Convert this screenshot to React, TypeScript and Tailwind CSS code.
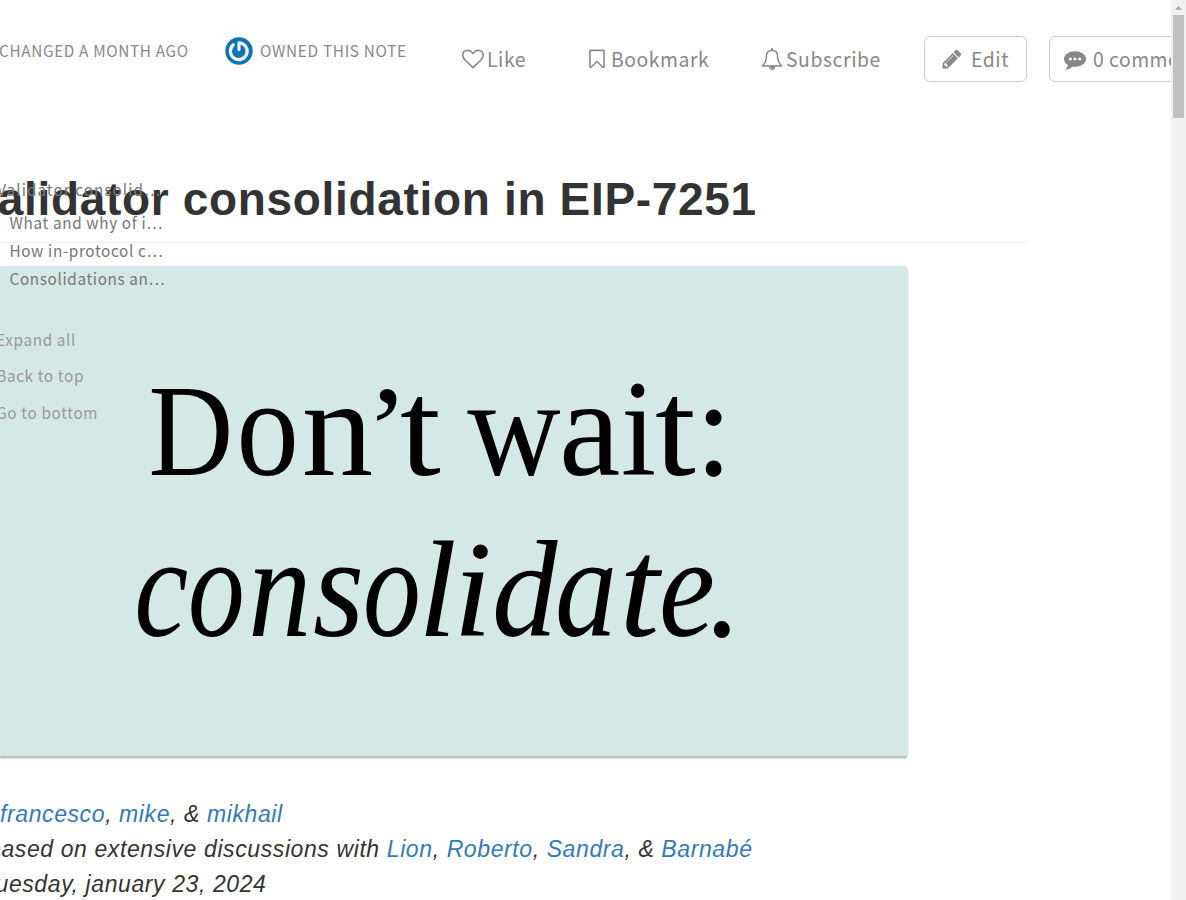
import React from "react";

const UI = "font-['Noto_Sans_CJK_SC','Open_Sans',sans-serif]";

function Fa({ d, className }: { d: string; className: string }) {
  return (
    <svg viewBox="0 0 1792 1792" fill="currentColor" className={className}>
      <path d={d} />
    </svg>
  );
}

const heart =
  "M1664 596q0-81-21.500-143t-55-98.500-81.500-59.500-94-31-98-8-112 25.500-110.500 64-86.500 72-60 61.500q-18 22-49 22t-49-22q-24-28-60-61.500t-86.500-72-110.500-64-112-25.500-98 8-94 31-81.500 59.500-55 98.500-21.500 143q0 168 187 355l581 560 580-559q188-188 188-356zm128 0q0 221-229 450l-623 600q-18 18-44 18t-44-18l-624-602q-10-8-27.500-26t-55.500-65.500-68-97.500-53.500-121-23.500-138q0-220 127-344t351-124q62 0 126.500 21.500t120 58 95.500 68.500 76 68q36-36 76-68t95.500-68.500 120-58 126.500-21.500q224 0 351 124t127 344z";
const bookmark =
  "M1408 256h-1024v1242l423-406 89-85 89 85 423 406v-1242zm12-128q23 0 44 9 33 13 52.500 41t19.500 62v1289q0 34-19.500 62t-52.500 41q-19 8-44 8-48 0-83-32l-441-424-441 424q-36 33-83 33-23 0-44-9-33-13-52.500-41t-19.500-62v-1289q0-34 19.500-62t52.500-41q21-9 44-9h1048z";
const bell =
  "M912 1696q0-16-16-16-59 0-101.500-42.500t-42.500-101.500q0-16-16-16t-16 16q0 73 51.500 124.500t124.500 51.500q16 0 16-16zM246 1408h1300q-266-300-266-832 0-51-24-105t-69-103-121.500-80.500-169.500-31.500-169.500 31.500-121.500 80.500-69 103-24 105q0 532-266 832zm1482 0q0 52-38 90t-90 38h-448q0 106-75 181t-181 75-181-75-75-181h-448q-52 0-90-38t-38-90q50-42 91-88t85-119.500 74.500-158.500 50-206 19.500-260q0-152 117-282.500t307-158.500q-8-19-8-39 0-40 28-68t68-28 68 28 28 68q0 20-8 39 190 28 307 158.500t117 282.500q0 139 19.500 260t50 206 74.500 158.500 85 119.500 91 88z";
const pencil =
  "M491 1536l91-91-235-235-91 91v107h128v128h107zm523-928q0-22-22-22-10 0-17 7l-542 542q-7 7-7 17 0 22 22 22 10 0 17-7l542-542q7-7 7-17zm-54-192l416 416-832 832h-416v-416zm683 96q0 53-37 90l-166 166-416-416 166-165q36-38 90-38 53 0 91 38l235 234q37 39 37 91z";
const comment =
  "M640 896q0-53-37.500-90.500t-90.500-37.500-90.500 37.500-37.500 90.500 37.500 90.500 90.500 37.500 90.500-37.500 37.500-90.500zm384 0q0-53-37.500-90.500t-90.500-37.500-90.500 37.500-37.500 90.500 37.500 90.500 90.500 37.500 90.500-37.500 37.500-90.500zm384 0q0-53-37.500-90.500t-90.500-37.500-90.500 37.500-37.500 90.500 37.500 90.500 90.500 37.500 90.500-37.500 37.500-90.500zm384 0q0 174-120 321.500t-326 233-450 85.500q-110 0-211-18-173 173-435 229-52 10-86 13-12 1-22-6t-13-18q-4-15 20-37 5-5 23.500-21.500t25.500-23.500 23.500-25.500 24-31.500 20.500-37 20-48 14.500-57.500 12.500-72.500q-146-90-229.500-216.500t-83.500-269.500q0-174 120-321.500t326-233 450-85.500 450 85.500 326 233 120 321.500z";

function Avatar() {
  return (
    <svg viewBox="0 0 28 28" className="h-7 w-7 shrink-0">
      <circle cx="14" cy="14" r="13.700" fill="#0a74b9" />
      <path d="M8.300 7.800A8.400 8.400 0 1 0 14 5.800V12.600" fill="none" stroke="#f4f4f2" strokeWidth="3.200" strokeLinecap="round" strokeLinejoin="round" />
    </svg>
  );
}

// Condensed label in the interface face
function Label({ children }: { children: React.ReactNode }) {
  return <span className="mb-[2px] inline-block origin-left scale-x-95">{children}</span>;
}

function Header() {
  return (
    <header className={`${UI} flex h-[118px] w-[1300px] pt-9 text-[#888]`}>
      <div className="flex h-[30px] w-[225px] shrink-0 items-center text-[16.1px] tracking-[0.71px] whitespace-nowrap">
        <span className="-ml-px flex">
          <Label>CHANGED A MONTH AGO</Label>
        </span>
      </div>
      <div className="flex h-[30px] w-[237px] shrink-0 items-center gap-[7px] text-[16.1px] tracking-[0.75px] whitespace-nowrap">
        <Avatar />
        <Label>OWNED THIS NOTE</Label>
      </div>
      <div className="flex h-[46px] w-[124px] shrink-0 items-center gap-[3px] text-[20.4px] tracking-[0.6px]">
        <Fa d={heart} className="h-[22px] w-[22px]" />
        <Label>Like</Label>
      </div>
      <div className="flex h-[46px] w-[175px] shrink-0 items-center gap-[3px] text-[20.4px] tracking-[0.55px]">
        <Fa d={bookmark} className="h-[22px] w-[22px]" />
        <Label>Bookmark</Label>
      </div>
      <div className="flex h-[46px] w-[162.5px] shrink-0 items-center gap-[3px] text-[20.4px] tracking-[0.6px]">
        <Fa d={bell} className="h-[22px] w-[22px]" />
        <Label>Subscribe</Label>
      </div>
      <button className="flex h-[46px] w-[103px] shrink-0 items-center gap-[8px] rounded-[6px] border border-[#ccc] pl-4 text-[20.4px] tracking-[0.6px]">
        <Fa d={pencil} className="h-[22px] w-[22px]" />
        <Label>Edit</Label>
      </button>
      <button className="ml-[22px] flex h-[46px] w-[170px] shrink-0 items-center gap-[7px] rounded-[6px] border border-[#ccc] pl-3.5 text-[20.4px] tracking-[0.5px] whitespace-nowrap">
        <Fa d={comment} className="h-[22px] w-[22px]" />
        <Label>0 comments</Label>
      </button>
    </header>
  );
}

// char, ink left and right on the canvas, ink left and right in 1/1000 em, font size, baseline
type Glyph = [string, number, number, number, number, number, number];

const roman: Glyph[] = [
  ["D", 150.5, 229, 16, 685, 131, 475],
  ["o", 240, 295, 29, 470, 139, 475],
  ["n", 304, 371, 16, 485, 139, 475],
  ["’", 376, 394, 79, 218, 123, 471],
  ["t", 402, 441, 13, 279, 138, 475],
  ["w", 470, 557, 21, 694, 139, 475],
  ["a", 564, 620, 37, 442, 139, 475],
  ["i", 623, 653, 16, 253, 138, 475],
  ["t", 657, 696, 13, 279, 138, 475],
  [":", 706, 721, 81, 192, 139, 475],
];

const italic: Glyph[] = [
  ["c", 138, 186, 30, 425, 144, 636],
  ["o", 191, 241, 27, 468, 144, 636],
  ["n", 250, 308, 14, 474, 144, 636],
  ["s", 315, 361, 16, 366, 144, 636],
  ["o", 366, 417, 27, 468, 144, 636],
  ["l", 424, 457, 41, 279, 138, 636],
  ["i", 460, 490, 49, 264, 138, 636],
  ["d", 494, 561, 15, 527, 138, 636],
  ["a", 557, 614, 17, 476, 144, 636],
  ["t", 625, 662, 38, 296, 142, 636],
  ["e", 663, 711, 31, 412, 144, 636],
  [".", 712, 727, 27, 138, 144, 636],
];

function Line({ glyphs }: { glyphs: Glyph[] }) {
  return (
    <>
      {glyphs.map(([ch, l, r, fl, fr, size, y], i) => {
        const sx = (r - l) / (((fr - fl) * size) / 1000);
        const x = l - (fl * size * sx) / 1000;
        return (
          <text key={i} fontSize={size} transform={`translate(${x} ${y}) scale(${sx} 1)`}>
            {ch}
          </text>
        );
      })}
    </>
  );
}

function Banner() {
  return (
    <div className="h-[490px] w-[907px] rounded-r-[2px] bg-[#d4e9e6] shadow-[0_2px_0_#c2c4c4,0_2px_3px_rgba(0,0,0,0.3)]">
      <svg viewBox="0 266 907 490" className="h-[490px] w-[907px] font-['Liberation_Serif',serif]">
        <Line glyphs={roman} />
        <g fontStyle="italic">
          <Line glyphs={italic} />
        </g>
      </svg>
    </div>
  );
}

function A({ children }: { children: React.ReactNode }) {
  return <a className="text-[#337ab7]">{children}</a>;
}

function Toc() {
  return (
    <nav
      className={`${UI} absolute top-[175px] left-0 origin-left scale-x-95 text-[16.1px] tracking-[0.67px] whitespace-nowrap text-[#777]`}
    >
      <div className="-ml-[3px] h-[33px] leading-7 tracking-[1.1px]">Validator consolid…</div>
      <div className="ml-[10px] h-7 leading-7">What and why of i…</div>
      <div className="ml-[10px] h-7 leading-7">How in-protocol c…</div>
      <div className="ml-[10px] h-7 leading-7">Consolidations an…</div>
      <div className="mt-[29px] -ml-[4px] flex flex-col text-[#999]">
        <a className="h-[36px] leading-[36px]">Expand all</a>
        <a className="h-[36px] leading-[36px]">Back to top</a>
        <a className="h-[37px] leading-[38px]">Go to bottom</a>
      </div>
    </nav>
  );
}

export default function App() {
  return (
    <div className="flex h-[900px] w-[1186px] overflow-hidden bg-white">
      <div className="relative w-[1171px] shrink-0 overflow-hidden">
        <Header />
        <main className="font-['Liberation_Sans',sans-serif] text-[#333]">
          <h1 className="mt-[52px] h-[73px] w-[1027px] border-b border-[#eee] text-[46px] leading-[58px] font-bold tracking-[0.67px] whitespace-nowrap">
            <span className="-ml-[31px]">Validator consolidation in EIP-7251</span>
          </h1>
          <div className="mt-[23px]">
            <Banner />
          </div>
          <div className="mt-[41px] text-[23px] leading-[35px] tracking-[0.6px] whitespace-nowrap italic">
            <p>
              <A>francesco</A>, <A>mike</A>, &amp; <A>mikhail</A>
            </p>
            <p className="-ml-[12px]">
              based on extensive discussions with <A>Lion</A>, <A>Roberto</A>, <A>Sandra</A>, &amp; <A>Barnabé</A>
            </p>
            <p className="-ml-[11.5px]">tuesday, january 23, 2024</p>
          </div>
        </main>
        <Toc />
      </div>
      <div className="flex w-[15px] shrink-0 flex-col items-center bg-[#f1f1f1]">
        <div className="flex h-[15px] items-center justify-center">
          <svg viewBox="0 0 8 4" className="h-1 w-[7px]" fill="#a3a3a3">
            <path d="M0 4L4 0L8 4Z" />
          </svg>
        </div>
        <div className="h-[103px] w-[11px] bg-[#c1c1c1]" />
      </div>
    </div>
  );
}
